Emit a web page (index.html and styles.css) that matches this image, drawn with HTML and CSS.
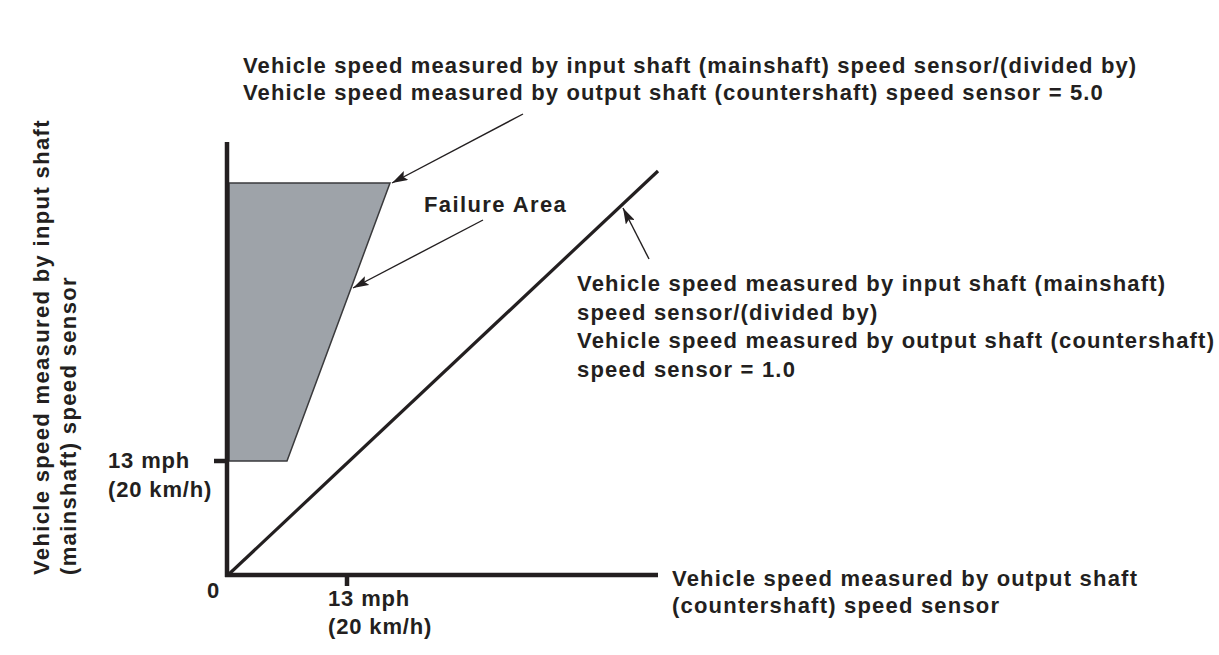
FILE: index.html
```html
<!DOCTYPE html>
<html lang="en">
<head>
<meta charset="utf-8">
<title>Speed sensor failure area</title>
<link rel="stylesheet" href="styles.css">
</head>
<body>
<div class="figure">
  <svg class="chart" width="1219" height="655" viewBox="0 0 1219 655" xmlns="http://www.w3.org/2000/svg">
    <defs>
      <marker id="head" viewBox="0 0 16 10" refX="16" refY="5" markerWidth="16" markerHeight="10" markerUnits="userSpaceOnUse" orient="auto">
        <path d="M0 0 L16 5 L0 10 L3 5 Z" fill="#231f20"/>
      </marker>
    </defs>
    <polygon class="area" points="229,183 390,183 287,461 229,461"/>
    <line class="axis" x1="227" y1="142" x2="227" y2="577"/>
    <line class="axis" x1="225" y1="575" x2="658" y2="575"/>
    <line class="axis" x1="214" y1="461" x2="227" y2="461"/>
    <line class="axis" x1="347" y1="575" x2="347" y2="586"/>
    <line class="ratio" x1="228" y1="575" x2="658" y2="171"/>
    <line class="leader" x1="523" y1="114" x2="392" y2="183" marker-end="url(#head)"/>
    <line class="leader" x1="483" y1="220" x2="353" y2="288" marker-end="url(#head)"/>
    <line class="leader" x1="649" y1="259" x2="623" y2="208" marker-end="url(#head)"/>
  </svg>

  <div class="label top-note">
    <div>Vehicle speed measured by input shaft (mainshaft) speed sensor/(divided by)</div>
    <div>Vehicle speed measured by output shaft (countershaft) speed sensor = 5.0</div>
  </div>

  <div class="label failure">Failure Area</div>

  <div class="label right-note">
    <div>Vehicle speed measured by input shaft (mainshaft)</div>
    <div>speed sensor/(divided by)</div>
    <div>Vehicle speed measured by output shaft (countershaft)</div>
    <div>speed sensor = 1.0</div>
  </div>

  <div class="label y-title">
    <div>Vehicle speed measured by input shaft</div>
    <div>(mainshaft) speed sensor</div>
  </div>

  <div class="label y-tick">
    <div>13 mph</div>
    <div>(20 km/h)</div>
  </div>

  <div class="label origin">0</div>

  <div class="label x-tick">
    <div>13 mph</div>
    <div>(20 km/h)</div>
  </div>

  <div class="label x-title">
    <div>Vehicle speed measured by output shaft</div>
    <div>(countershaft) speed sensor</div>
  </div>
</div>
</body>
</html>
```

FILE: styles.css
```css
html, body {
  margin: 0;
  padding: 0;
  background: #ffffff;
}

.figure {
  position: relative;
  width: 1219px;
  height: 655px;
  overflow: hidden;
  font-family: "Liberation Sans", Arial, sans-serif;
  font-weight: bold;
  font-size: 22px;
  color: #231f20;
}

.chart {
  position: absolute;
  left: 0;
  top: 0;
}

.area {
  fill: #9ea3a9;
  stroke: #3a3a3c;
  stroke-width: 1.5;
}

.axis {
  stroke: #231f20;
  stroke-width: 4.5;
}

.ratio {
  stroke: #231f20;
  stroke-width: 3.2;
}

.leader {
  stroke: #231f20;
  stroke-width: 1.4;
}

.label {
  position: absolute;
  white-space: nowrap;
  line-height: 27px;
  letter-spacing: 1.15px;
}

.top-note {
  left: 243px;
  top: 52px;
}

.failure {
  left: 424px;
  top: 191px;
  letter-spacing: 1.4px;
}

.right-note {
  left: 577px;
  top: 270px;
  line-height: 28.5px;
  letter-spacing: 1.2px;
}

.y-title {
  left: 28px;
  top: 575px;
  transform: rotate(-90deg);
  transform-origin: 0 0;
  letter-spacing: 1.35px;
}

.y-tick {
  left: 108px;
  top: 446px;
  line-height: 29px;
  letter-spacing: 0.85px;
}

.origin {
  left: 207px;
  top: 577px;
}

.x-tick {
  left: 328px;
  top: 585px;
  line-height: 28px;
  letter-spacing: 0.85px;
}

.x-title {
  left: 672px;
  top: 565px;
  letter-spacing: 1.2px;
}
```
